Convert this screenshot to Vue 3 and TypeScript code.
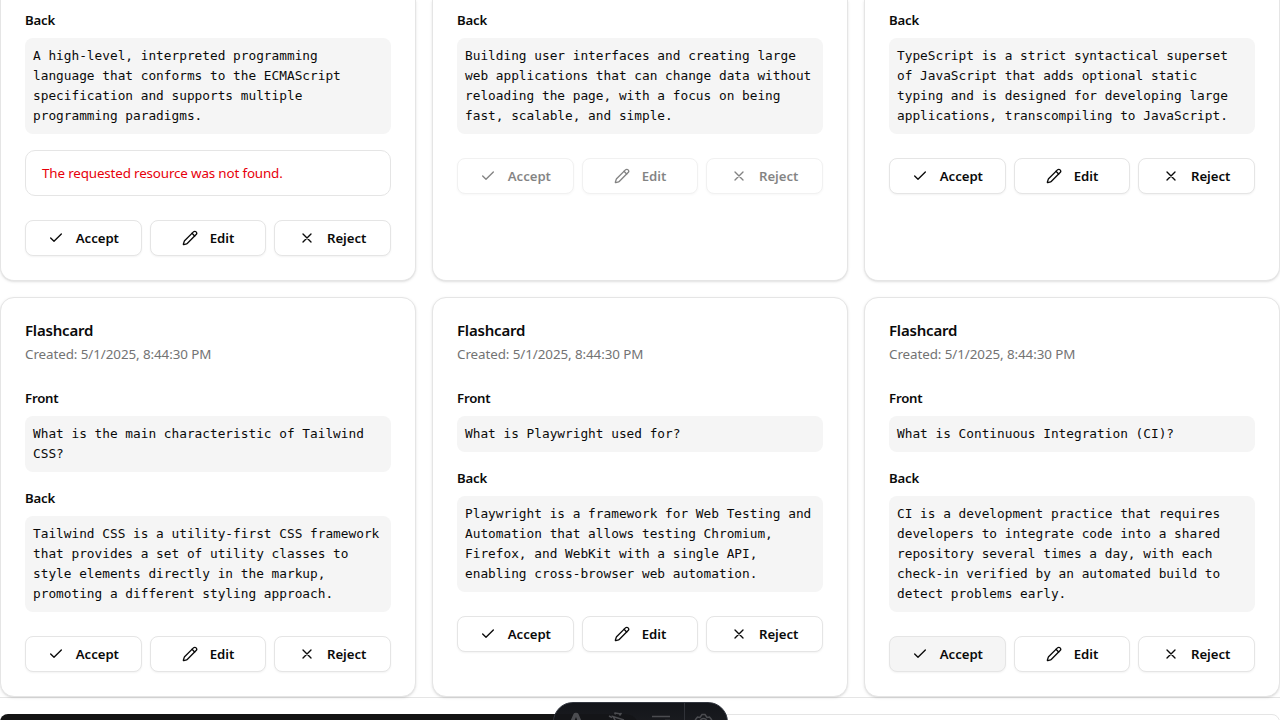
<script setup lang="ts">
interface Card {
  id: number
  front?: string[]
  back: string[]
  error?: string
  disabled?: boolean
  hovered?: boolean
}

const created = 'Created: 5/1/2025, 8:44:30 PM'
const actions = ['Accept', 'Edit', 'Reject'] as const

const rows: Card[][] = [
  [
    {
      id: 1,
      back: ['A high-level, interpreted programming', 'language that conforms to the ECMAScript', 'specification and supports multiple', 'programming paradigms.'],
      error: 'The requested resource was not found.',
    },
    {
      id: 2,
      back: ['Building user interfaces and creating large', 'web applications that can change data without', 'reloading the page, with a focus on being', 'fast, scalable, and simple.'],
      disabled: true,
    },
    {
      id: 3,
      back: ['TypeScript is a strict syntactical superset', 'of JavaScript that adds optional static', 'typing and is designed for developing large', 'applications, transcompiling to JavaScript.'],
    },
  ],
  [
    {
      id: 4,
      front: ['What is the main characteristic of Tailwind', 'CSS?'],
      back: ['Tailwind CSS is a utility-first CSS framework', 'that provides a set of utility classes to', 'style elements directly in the markup,', 'promoting a different styling approach.'],
    },
    {
      id: 5,
      front: ['What is Playwright used for?'],
      back: ['Playwright is a framework for Web Testing and', 'Automation that allows testing Chromium,', 'Firefox, and WebKit with a single API,', 'enabling cross-browser web automation.'],
    },
    {
      id: 6,
      front: ['What is Continuous Integration (CI)?'],
      back: ['CI is a development practice that requires', 'developers to integrate code into a shared', 'repository several times a day, with each', 'check-in verified by an automated build to', 'detect problems early.'],
      hovered: true,
    },
  ],
]
</script>

<template>
  <div class="page">
    <div v-for="(row, r) in rows" :key="r" class="row" :class="{ clipped: r === 0 }">
      <article v-for="card in row" :key="card.id" class="card">
        <header v-if="card.front" class="head">
          <h3 class="title">Flashcard</h3>
          <p class="date">{{ created }}</p>
        </header>
        <section v-if="card.front" class="field">
          <h4 class="label">Front</h4>
          <div class="code">{{ card.front.join('\n') }}</div>
        </section>
        <section class="field">
          <h4 class="label">Back</h4>
          <div class="code">{{ card.back.join('\n') }}</div>
        </section>
        <div v-if="card.error" class="error">{{ card.error }}</div>
        <div class="actions" :class="{ disabled: card.disabled }">
          <button v-for="a in actions" :key="a" class="btn" :class="{ hovered: card.hovered && a === 'Accept' }" :disabled="card.disabled">
            <svg class="icon" viewBox="0 0 24 24">
              <path v-if="a === 'Accept'" d="M20 6 9 17l-5-5" />
              <template v-else-if="a === 'Edit'">
                <path d="M21.174 6.812a1 1 0 0 0-3.986-3.987L3.842 16.174a2 2 0 0 0-.5.83l-1.321 4.352a.5.5 0 0 0 .623.622l4.353-1.32a2 2 0 0 0 .83-.497z" />
                <path d="m15 5 4 4" />
              </template>
              <path v-else d="M18 6 6 18M6 6l12 12" />
            </svg>
            <span>{{ a }}</span>
          </button>
        </div>
      </article>
    </div>
    <footer class="footer">
      <div class="primary"></div>
      <div class="secondary"></div>
    </footer>
    <div class="toolbar">
      <svg class="tool-icons" viewBox="0 0 174 18">
        <path class="pill" d="M0 11h72q10 1 12 7H0z" />
        <path class="fill" d="m17 19 3.500-8q.500-1.300 2.500-1.300t2.500 1.300l3.500 8h-4l-2-5-2 5z" />
        <path class="line" d="m71 17-11-3.500 3.500 6M56 13l3 1.500M61.500 9.500l1 2M68.500 10l-2 2.500M62 10l6 1" />
        <path class="line" d="M99 13.500h18M112 17.500h5" />
        <path class="line" d="M142.500 19v-2.500l2-2.500 2.500.500 2-3h3l2 3 2.500-.500 2 2.500V19M147 19a3.500 3.500 0 0 1 7 0" />
        <path class="divider" d="M131.500 0v18" />
      </svg>
    </div>
  </div>
</template>

<style>
body { background: #fff; overflow: hidden; }
</style>

<style scoped>
* { box-sizing: border-box; }
.page { position: relative; width: 1280px; height: 720px; overflow: hidden; background: #fff; color: #0a0a0a; font-family: "Noto Sans", "Open Sans", sans-serif; font-size: 13.4px; }
.row { display: grid; grid-template-columns: repeat(3, 1fr); gap: 16px; height: 400px; margin-bottom: 16px; }
.row:nth-child(2) { margin-bottom: 0; }
.row.clipped { height: 281px; }
.card { border: 1px solid #e5e5e5; border-radius: 14px; padding: 24px; background: #fff; box-shadow: 0 1px 3px rgba(0,0,0,.1), 0 1px 2px -1px rgba(0,0,0,.1); }
.clipped .card { border-top: 0; border-radius: 0 0 14px 14px; padding-top: 10px; }
.head { margin-bottom: 24px; }
.title { margin: 0 0 6px; font-size: 15px; line-height: 16px; font-weight: 600; letter-spacing: -.2px; }
.date { margin: 0; line-height: 20px; color: #737373; letter-spacing: -.08px; }
.field + .field { margin-top: 16px; }
.label { margin: 0 0 8px; font-size: 13.2px; line-height: 20px; font-weight: 600; letter-spacing: -.2px; }
.code { padding: 8px; border-radius: 8px; background: #f5f5f5; font: 12.79px/20px "DejaVu Sans Mono", monospace; white-space: pre; }
.error { margin-top: 16px; height: 46px; padding: 12px 16px; border: 1px solid #e5e5e5; border-radius: 10px; line-height: 20px; color: #e7000b; letter-spacing: -.15px; }
.actions { display: grid; grid-template-columns: repeat(3, 1fr); gap: 8px; margin-top: 24px; }
.btn { display: flex; align-items: center; justify-content: center; gap: 12px; height: 36px; padding: 0; border: 1px solid #e5e5e5; border-radius: 8px; background: #fff; box-shadow: 0 1px 2px rgba(0,0,0,.05); color: #0a0a0a; font: 600 13.2px/20px "Noto Sans", sans-serif; letter-spacing: -.04px; }
.hovered { background: #f5f5f5; }
.disabled .btn { opacity: .5; }
.icon { width: 16px; height: 16px; flex: none; fill: none; stroke: currentColor; stroke-width: 2; stroke-linecap: round; stroke-linejoin: round; }
.footer { display: grid; grid-template-columns: 1fr 1fr; height: 24px; padding-top: 16px; border-top: 1px solid #e5e5e5; }
.primary { height: 36px; border-radius: 8px; background: #141414; }
.secondary { height: 36px; border: 1px solid #e5e5e5; border-radius: 8px; }
.toolbar { position: absolute; left: 553px; top: 702px; width: 175px; height: 40px; border: 1px solid #343841; border-radius: 20px; background: linear-gradient(#13151a, #202124); overflow: hidden; }
.tool-icons { display: block; width: 174px; height: 18px; margin-left: -1px; }
.pill { fill: #141518; }
.fill { fill: #4b4c50; }
.line { fill: none; stroke: #4b4c50; stroke-width: 1.5; }
.divider { stroke: #303238; }
</style>
